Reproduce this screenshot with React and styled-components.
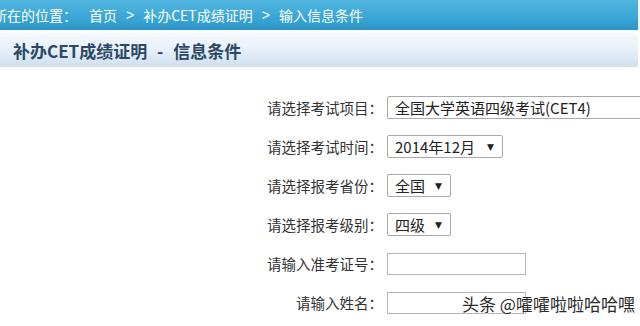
import styled, { createGlobalStyle } from "styled-components";

const Global = createGlobalStyle`
  html, body {
    margin: 0;
    padding: 0;
    background: #ffffff;
  }
  body {
    font-family: "Noto Sans CJK SC", "Liberation Sans", sans-serif;
    overflow: hidden;
  }
`;

const rows = [
  { label: "请选择考试项目：", kind: "select", value: "全国大学英语四级考试(CET4)", width: 262, arrow: false },
  { label: "请选择考试时间：", kind: "select", value: "2014年12月", width: 116, arrow: true },
  { label: "请选择报考省份：", kind: "select", value: "全国", width: 64, arrow: true },
  { label: "请选择报考级别：", kind: "select", value: "四级", width: 64, arrow: true },
  { label: "请输入准考证号：", kind: "input" },
  { label: "请输入姓名：", kind: "input" },
];

function App() {
  return (
    <>
      <Global />
      <Page>
        <Breadcrumb>
          <span>所在的位置：</span>
          <Crumb>首页</Crumb>
          <Sep>&gt;</Sep>
          <span>补办CET成绩证明</span>
          <Sep>&gt;</Sep>
          <span>输入信息条件</span>
        </Breadcrumb>
        <TitleBar>补办CET成绩证明 - 信息条件</TitleBar>
        <Form>
          {rows.map((r) => (
            <Row key={r.label}>
              <Label>{r.label}</Label>
              {r.kind === "select" ? (
                <SelectBox $w={r.width}>
                  <span>{r.value}</span>
                  {r.arrow && <Arrow>▼</Arrow>}
                </SelectBox>
              ) : (
                <TextBox />
              )}
            </Row>
          ))}
        </Form>
        <Watermark>头条 @嚯嚯啦啦哈哈嘿</Watermark>
      </Page>
    </>
  );
}

const Page = styled.div`
  position: relative;
  width: 640px;
  height: 326px;
  overflow: hidden;
`;

const Breadcrumb = styled.div`
  width: 645px;
  height: 30px;
  margin-left: -7px;
  display: flex;
  align-items: center;
  gap: 8px;
  background: linear-gradient(#52b6e0, #35a3d3 70%, #2e93c4);
  color: #ffffff;
  font-size: 14px;
  white-space: nowrap;
`;

const Crumb = styled.span`
  margin-left: 4px;
`;

const Sep = styled.span`
  font-family: "Liberation Sans", sans-serif;
  margin: 0 1px;
`;

const TitleBar = styled.div`
  width: 638px;
  height: 34px;
  margin-top: 3px;
  padding-left: 13px;
  box-sizing: border-box;
  display: flex;
  align-items: center;
  background: linear-gradient(#f6f9fd, #e6eff9 50%, #cfdfee);
  color: #2b4866;
  font-size: 17px;
  font-weight: bold;
  word-spacing: 6px;
  white-space: pre;
`;

const Form = styled.div`
  display: flex;
  flex-direction: column;
  gap: 16px;
  padding-top: 29px;
`;

const Row = styled.div`
  display: flex;
  align-items: center;
  height: 23px;
`;

const Label = styled.div`
  width: 387px;
  flex-shrink: 0;
  text-align: right;
  padding-right: 4px;
  box-sizing: border-box;
  font-size: 14.5px;
  color: #333333;
  white-space: nowrap;
`;

const SelectBox = styled.div`
  width: ${(p) => p.$w}px;
  height: 23px;
  flex-shrink: 0;
  box-sizing: border-box;
  border: 1px solid #a9a9a9;
  border-radius: 2px;
  background: #ffffff;
  display: flex;
  align-items: center;
  justify-content: space-between;
  padding: 0 8px 0 7px;
  font-size: 15px;
  color: #222222;
  white-space: nowrap;
`;

const Arrow = styled.span`
  font-family: "DejaVu Sans", sans-serif;
  font-size: 9px;
  color: #222222;
`;

const TextBox = styled.div`
  width: 139px;
  height: 22px;
  flex-shrink: 0;
  box-sizing: border-box;
  border: 1px solid #b5b5b5;
  background: #ffffff;
`;

const Watermark = styled.div`
  position: absolute;
  left: 462px;
  top: 291px;
  font-size: 17px;
  color: #2a2a2a;
  white-space: nowrap;
  text-shadow: 0 0 2px #ffffff, 0 0 2px #ffffff;
`;

export default App;
